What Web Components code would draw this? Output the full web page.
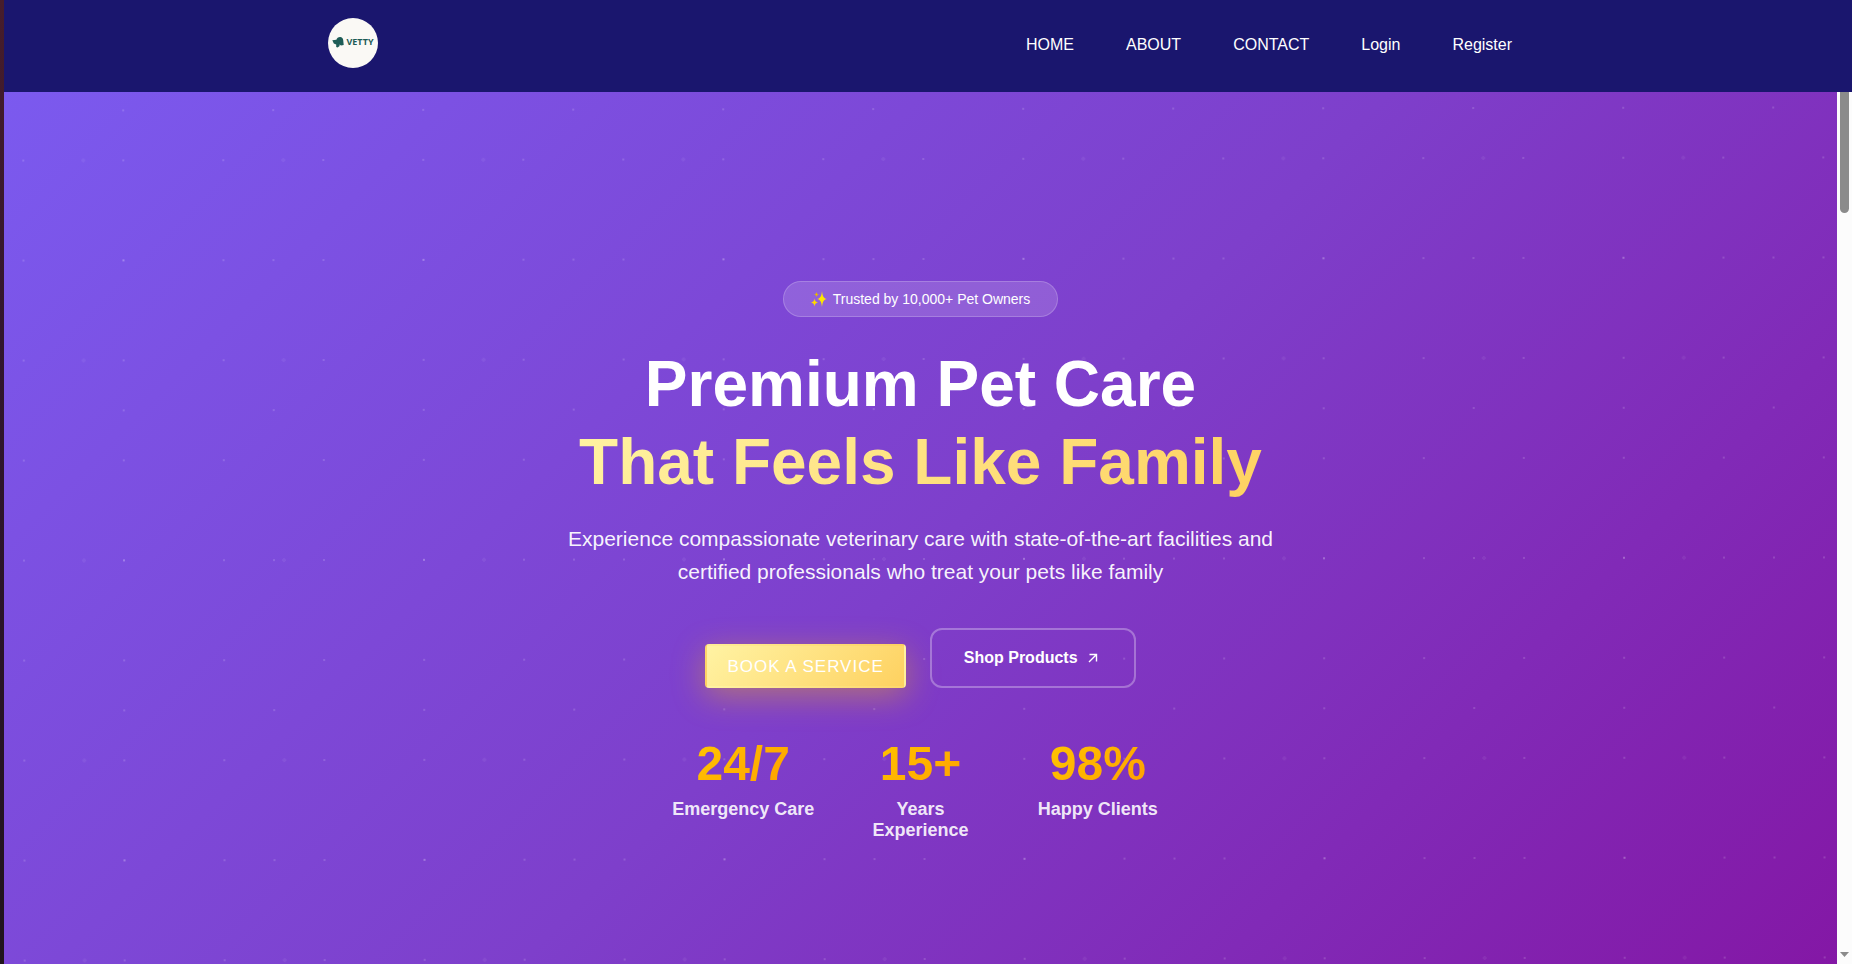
<!DOCTYPE html>
<html lang="en">
<head>
<meta charset="utf-8">
<meta name="viewport" content="width=device-width, initial-scale=1">
<title>Vetty</title>
<style>
  html, body { margin: 0; height: 100%; overflow: hidden; }
  body { font-family: "Liberation Sans", Arial, sans-serif; font-size: 16px; color: #fff; }
</style>
</head>
<body>
<vetty-app></vetty-app>
<script>
const define = (name, html) => {
  const template = document.createElement('template');
  template.innerHTML = html;
  customElements.define(name, class extends HTMLElement {
    constructor() {
      super();
      this.attachShadow({ mode: 'open' }).append(template.content.cloneNode(true));
    }
  });
};

define('vetty-logo', `
<style>
  :host { display: block; }
  a { display: flex; align-items: center; justify-content: center; gap: 2px; box-sizing: border-box;
      width: 50px; height: 50px; padding-bottom: 2px; border-radius: 50%;
      background: #faf9f5; color: #1d5c56; text-decoration: none;
      font: 700 9px/12px "Noto Sans", sans-serif; }
  svg { display: block; }
</style>
<a href="#" aria-label="Vetty home">
  <svg width="12" height="12" viewBox="0 0 12 12" fill="currentColor" aria-hidden="true">
    <path d="M.3 4.2 L4.4 3.8 C4.8 2.2 6.2 1 8 1 C10 .9 10.9 2.3 11.2 4 L11.7 9 L9 9.4 L7.5 8.6 L7.6 10 L5.6 11.5 L4.2 10.9 L4.2 8.4 L1.8 7.4 Z"/>
  </svg>
  <span>VETTY</span>
</a>`);

define('nav-link', `
<style>
  :host { display: block; }
  a { display: block; padding: 8px 16px; color: #fff; text-decoration: none; line-height: 20px; }
</style>
<a href="#"><slot></slot></a>`);

define('site-header', `
<style>
  :host { display: block; position: relative; z-index: 2; background: #1a166e; }
  header { display: flex; align-items: center; justify-content: space-between;
           max-width: 1200px; margin: 0 auto; padding: 18px 0 24px; }
  nav { display: flex; gap: 20px; padding-top: 4px; }
</style>
<header>
  <vetty-logo></vetty-logo>
  <nav aria-label="Main">
    <nav-link>HOME</nav-link>
    <nav-link>ABOUT</nav-link>
    <nav-link>CONTACT</nav-link>
    <nav-link>Login</nav-link>
    <nav-link>Register</nav-link>
  </nav>
</header>`);

define('trust-badge', `
<style>
  :host { display: block; box-sizing: border-box; padding: 9px 27px; border: 1px solid rgba(255,255,255,.2);
          border-radius: 50px; background: rgba(255,255,255,.15); font-size: 14px; line-height: 16px; }
  span { display: flex; align-items: center; gap: 4px; }
  svg { display: block; }
</style>
<span>
  <svg width="18" height="16" viewBox="0 0 18 16" aria-hidden="true">
    <path fill="#ffe600" d="M11 0 C11.700 5.600 12.500 7.100 16 8 C12.500 8.900 11.700 10.400 11 16 C10.300 10.400 9.500 8.900 6 8 C9.500 7.100 10.300 5.600 11 0Z"/>
    <path fill="#ffd800" d="M3.500 7.500 C4 10.200 4.700 10.900 7 11.500 C4.700 12.100 4 12.800 3.500 15.500 C3 12.800 2.300 12.100 0 11.500 C2.300 10.900 3 10.200 3.500 7.500Z"/>
    <path fill="#e8b800" d="M5.500 1 C5.900 2.800 6.300 3.200 8 3.500 C6.300 3.800 5.900 4.200 5.500 6 C5.100 4.200 4.700 3.800 3 3.500 C4.700 3.200 5.100 2.800 5.500 1Z"/>
  </svg>
  <slot></slot>
</span>`);

define('book-button', `
<style>
  :host { display: block; }
  button { display: block; box-sizing: border-box; height: 44px; padding: 1px 20px 0; border: 2px solid transparent;
           border-radius: 4px; background: linear-gradient(135deg, #fff3a3, #fed160); color: #fff;
           box-shadow: 0 8px 32px rgba(255,193,7,.4); font: 400 17px/24px "Liberation Sans", Arial, sans-serif;
           letter-spacing: 1px; }
</style>
<button type="button"><slot></slot></button>`);

define('shop-button', `
<style>
  :host { display: block; }
  button { display: flex; align-items: center; gap: 9px; box-sizing: border-box; height: 60px; padding: 0 35px 0 32px;
           border: 2px solid rgba(255,255,255,.3); border-radius: 12px; background: transparent; color: #fff;
           font: 700 16px/20px "Liberation Sans", Arial, sans-serif; }
  svg { display: block; }
</style>
<button type="button"><slot></slot>
  <svg width="12" height="12" viewBox="0 0 12 12" fill="none" stroke="currentColor" stroke-width="1.4" aria-hidden="true"><path d="M2.500 2.500H9.500V9.500M9.500 2.500L2 10"/></svg>
</button>`);

define('stat-item', `
<style>
  :host { display: block; text-align: center; font-weight: 700; }
  strong { display: block; font-size: 48px; line-height: 56px; color: transparent;
           background: linear-gradient(135deg, #ffcc00, #ff9800); background-clip: text; -webkit-background-clip: text; }
  span { display: block; margin-top: 7px; font-size: 18px; line-height: 21px; color: rgba(255,255,255,.9); }
</style>
<strong><slot name="value"></slot></strong>
<span><slot></slot></span>`);

define('hero-section', `
<style>
  :host { display: flex; flex-direction: column; align-items: center; justify-content: center; position: relative;
          overflow: hidden; min-height: 100vh; box-sizing: border-box; padding-bottom: 2px; text-align: center;
          background: linear-gradient(135deg, #7b5aef 0%, #7e3fcb 50%, #8415a3 100%); }
  :host::before { content: ""; position: absolute; inset: -1px 0 1px; transform: rotate(-.1deg);
    background-image:
      radial-gradient(circle at 20% 80%, rgba(255,255,255,.15) 1px, transparent 1px),
      radial-gradient(circle at 80% 20%, rgba(255,255,255,.15) 1px, transparent 1px),
      radial-gradient(circle at 40% 40%, rgba(255,255,255,.06) 2px, transparent 2px);
    background-size: 100px 100px, 150px 150px, 200px 200px; }
  trust-badge, h1, p, .actions, .stats { position: relative; }
  h1 { margin: 28px 0 0; font-size: 64px; line-height: 78px; font-weight: 700; }
  h1 span { display: block; }
  .gold { color: transparent; background: linear-gradient(135deg, #fff3a3, #fed160); background-clip: text; -webkit-background-clip: text; }
  p { max-width: 720px; margin: 21px 0 0; font-size: 21px; line-height: 33px; color: rgba(255,255,255,.95); }
  .actions { display: flex; flex-wrap: wrap; align-items: flex-end; justify-content: center; gap: 24px; margin-top: 40px; }
  .stats { display: grid; grid-template-columns: repeat(3, 1fr); gap: 32px; width: 100%; max-width: 500px; margin-top: 48px; }
</style>
<trust-badge>Trusted by 10,000+ Pet Owners</trust-badge>
<h1><span>Premium Pet Care</span><span class="gold">That Feels Like Family</span></h1>
<p>Experience compassionate veterinary care with state-of-the-art facilities and certified professionals who treat your pets like family</p>
<div class="actions">
  <book-button>BOOK A SERVICE</book-button>
  <shop-button>Shop Products</shop-button>
</div>
<div class="stats">
  <stat-item><b slot="value">24/7</b>Emergency Care</stat-item>
  <stat-item><b slot="value">15+</b>Years Experience</stat-item>
  <stat-item><b slot="value">98%</b>Happy Clients</stat-item>
</div>`);

define('scroll-track', `
<style>
  :host { display: flex; flex-direction: column; align-items: center; justify-content: space-between;
          box-sizing: border-box; width: 15px; padding-bottom: 7px; background: #fcfcfc; }
  div { width: 9px; height: 14%; border-radius: 0 0 5px 5px; background: #8b8b8b; }
  svg { display: block; }
</style>
<div></div>
<svg width="9" height="5" viewBox="0 0 9 5" fill="#8b8b8b" aria-hidden="true"><path d="M0 0H9L4.500 5Z"/></svg>`);

define('vetty-app', `
<style>
  :host { display: grid; grid-template: auto minmax(0, 1fr) / 4px minmax(0, 1fr) auto; height: 100vh; }
  .edge { grid-row: 1 / 3; background: linear-gradient(#471d2b, #32162e 35%, #2a1428 65%, #20141c); }
  site-header { grid-column: 2 / 4; }
  main { overflow: hidden; }
  hero-section { margin-top: -12px; }
</style>
<div class="edge"></div>
<site-header></site-header>
<main><hero-section></hero-section></main>
<scroll-track></scroll-track>`);
</script>
</body>
</html>
